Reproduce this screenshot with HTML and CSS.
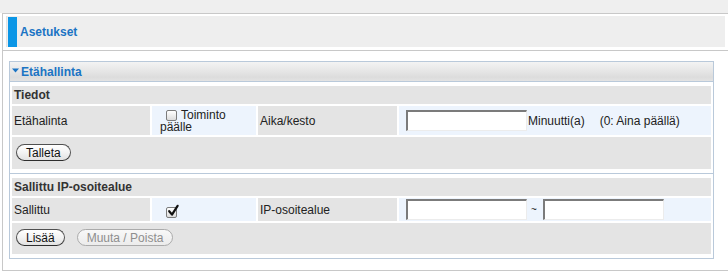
FILE: index.html
```html
<!DOCTYPE html>
<html lang="fi">
<head>
<meta charset="utf-8">
<title>Asetukset</title>
<link rel="stylesheet" href="styles.css">
</head>
<body>
<div class="topband"></div>
<div class="page">
  <div class="pagehead">
    <div class="titlebox">
      <span class="titlebar"></span>
      <h1 class="pagetitle">Asetukset</h1>
    </div>
  </div>
  <div class="panel">
    <div class="panelhead">
      <svg class="tri" width="7" height="5" viewBox="0 0 7 5"><path d="M0 0.5H7L3.5 4.5Z" fill="#1b74c4"/></svg>
      <span class="paneltitle">Etähallinta</span>
    </div>
    <div class="section">
      <div class="row head">Tiedot</div>
      <div class="row grid tall">
        <div class="cell label">Etähalinta</div>
        <div class="cell val check">
          <label class="chklabel"><span class="cb"></span>Toiminto päälle</label>
        </div>
        <div class="cell label">Aika/kesto</div>
        <div class="cell val field-cell">
          <input class="field" type="text">
          <span class="unit">Minuutti(a)</span>
          <span class="note">(0: Aina päällä)</span>
        </div>
      </div>
      <div class="row btns first-btns">
        <button class="btn" type="button">Talleta</button>
      </div>
    </div>
    <div class="section">
      <div class="row head">Sallittu IP-osoitealue</div>
      <div class="row grid short">
        <div class="cell label">Sallittu</div>
        <div class="cell val check">
          <span class="cb checked"><svg width="14" height="14" viewBox="0 0 14 14"><path d="M3.2 7.2L6 10.6L11.6 1.8" fill="none" stroke="#111" stroke-width="2.2" stroke-linecap="round" stroke-linejoin="round"/></svg></span>
        </div>
        <div class="cell label">IP-osoitealue</div>
        <div class="cell val field-cell">
          <input class="field" type="text">
          <span class="tilde">~</span>
          <input class="field" type="text">
        </div>
      </div>
      <div class="row btns">
        <button class="btn" type="button">Lisää</button>
        <button class="btn" type="button" disabled>Muuta / Poista</button>
      </div>
    </div>
  </div>
</div>
</body>
</html>
```
FILE: styles.css
```css
html, body {
  margin: 0;
  padding: 0;
  background: #ffffff;
}

body {
  font-family: "Liberation Sans", Arial, Helvetica, sans-serif;
  font-size: 12px;
  color: #222222;
}

.topband {
  height: 13px;
  background: #efefef;
}

.page {
  margin-left: 2px;
  border-top: 1px solid #c8c8c8;
  border-left: 1px solid #c8c8c8;
  border-bottom: 1px solid #c8c8c8;
  padding-bottom: 11px;
}

.pagehead {
  padding: 2px 3px 3px 3px;
  border-bottom: 1px solid #c8c8c8;
}

.titlebox {
  height: 31px;
  background: #eeeeee;
  border-left: 1px solid #e2e2e2;
  padding-left: 1px;
  display: flex;
  align-items: stretch;
}

.titlebar {
  width: 9px;
  margin-top: 1px;
  background: #0b96e6;
}

.pagetitle {
  margin: 0 0 0 3px;
  font-size: 12px;
  font-weight: bold;
  color: #1b74c4;
  display: flex;
  align-items: center;
  padding-top: 1px;
}

.panel {
  margin: 10px 0 0 6px;
  width: 705px;
  box-sizing: border-box;
  border: 1px solid #b9c9da;
}

.panelhead {
  height: 19px;
  border-bottom: 1px solid #b9c9da;
  background: linear-gradient(#f3f3f3, #e4e4e4 55%, #dcdcdc 80%, #e3e3e3);
  display: flex;
  align-items: center;
  padding-left: 2px;
}

.tri {
  margin-right: 2px;
  margin-top: -3px;
}

.paneltitle {
  font-weight: bold;
  color: #1b74c4;
}

.section {
  display: flex;
  flex-direction: column;
  gap: 2px;
  padding: 4px 2px;
}

.section + .section {
  border-top: 1px solid #b9c9da;
}

.row {
  background: #e4e4e4;
}

.row.head {
  height: 18px;
  display: flex;
  align-items: center;
  padding-left: 2px;
  font-weight: bold;
  color: #333333;
}

.row.grid {
  background: transparent;
  display: grid;
  grid-template-columns: 138px 104px 139px 1fr;
  gap: 2px;
}

.row.tall { height: 29px; }
.row.short { height: 23px; }

.cell {
  display: flex;
  align-items: center;
}

.cell.label {
  background: #e4e4e4;
  padding-left: 2px;
}

.cell.val {
  background: #edf4fd;
}

.cell.check {
  padding-left: 8px;
}

.chklabel {
  line-height: 12px;
  padding-top: 1px;
}

.cb {
  display: inline-block;
  width: 11px;
  height: 11px;
  box-sizing: border-box;
  border: 1px solid #7c7c7c;
  border-radius: 2px;
  background: linear-gradient(#ffffff, #dcdcdc);
  margin: 0 4px 0 6px;
  vertical-align: -2px;
  position: relative;
}

.cb.checked {
  margin-top: 5px;
}

.cb.checked svg {
  position: absolute;
  left: -1px;
  top: -4px;
}

.field-cell {
  padding-left: 7px;
}

.field {
  width: 121px;
  height: 21px;
  box-sizing: border-box;
  margin: 0;
  padding: 0 2px;
  background: #ffffff;
  border-style: solid;
  border-width: 2px 1px 1px 2px;
  border-color: #7b7b7b #ececec #ececec #7b7b7b;
  font-family: inherit;
  font-size: 12px;
  outline: none;
}

.unit {
  margin-left: 1px;
}

.note {
  margin-left: 15px;
}

.tilde {
  margin: 0 6px 0 4px;
  font-size: 10px;
}

.row.btns {
  height: 32px;
  display: flex;
  align-items: flex-start;
  gap: 12px;
  padding: 7px 0 0 4px;
  box-sizing: border-box;
}

.section + .section .row.btns {
  height: 31px;
  padding-top: 6px;
}

.btn {
  height: 17px;
  box-sizing: border-box;
  padding: 0 9px;
  margin: 0;
  border: 1px solid #505050;
  border-bottom-color: #2e2e2e;
  border-radius: 9px;
  background: linear-gradient(#ffffff, #f3f3f3 50%, #e2e2e2);
  font-family: inherit;
  font-size: 12px;
  line-height: 14px;
  color: #111111;
}

.btn:disabled {
  border-color: #ababab;
  color: #8e8e8e;
  background: linear-gradient(#f8f8f8, #ececec);
}
```
